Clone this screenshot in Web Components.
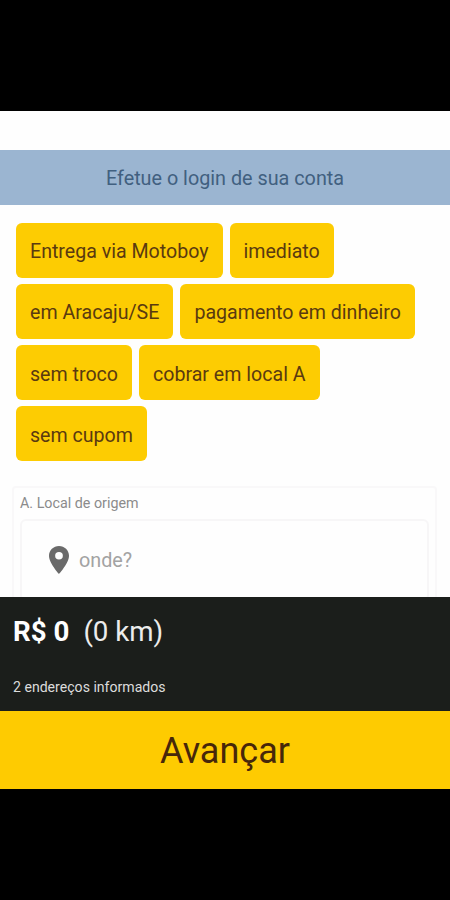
<!DOCTYPE html>
<html lang="pt-BR">
<head>
<meta charset="utf-8">
<meta name="viewport" content="width=device-width, initial-scale=1">
<title>Entrega</title>
<style>
    body{
        margin: 0;
        background-color: #000;
        font-family: Roboto, sans-serif;
    }
</style>
</head>
<body>
<entrega-app>
    <login-bar>Efetue o login de sua conta</login-bar>
    <chip-list>
        <option-chip>Entrega via Motoboy</option-chip>
        <option-chip>imediato</option-chip>
        <option-chip>em Aracaju/SE</option-chip>
        <option-chip>pagamento em dinheiro</option-chip>
        <option-chip>sem troco</option-chip>
        <option-chip>cobrar em local A</option-chip>
        <option-chip>sem cupom</option-chip>
    </chip-list>
    <address-card label="A. Local de origem">onde?</address-card>
    <price-summary slot="footer">
        <span slot="price">R$ 0</span>
        <span slot="distance">(0 km)</span>
        2 endereços informados
    </price-summary>
    <next-button slot="footer">Avançar</next-button>
</entrega-app>

<script>
class EntregaApp extends HTMLElement{
    constructor(){
        super()
        this.attachShadow({mode:"open"})
        this.shadowRoot.innerHTML = `
        <style>
            :host{
                display: flex;
                flex-direction: column;
                box-sizing: border-box;
                height: 900px;
                padding: 111px 0;
                background-color: #000;
            }
            main{
                flex: 1;
                min-height: 0;
                overflow: hidden;
                padding-top: 39px;
                background-color: #fefefe;
            }
            footer{
                flex: none;
            }
        </style>
        <main><slot></slot></main>
        <footer><slot name="footer"></slot></footer>
        `
    }
}
customElements.define('entrega-app', EntregaApp)

class LoginBar extends HTMLElement{
    constructor(){
        super()
        this.attachShadow({mode:"open"})
        this.shadowRoot.innerHTML = `
        <style>
            :host{
                display: flex;
                align-items: center;
                justify-content: center;
                box-sizing: border-box;
                height: 55px;
                padding-top: 2px;
                background-color: #9bb5d1;
                color: #416080;
                font-size: 19.8px;
            }
        </style>
        <slot></slot>
        `
    }
}
customElements.define('login-bar', LoginBar)

class ChipList extends HTMLElement{
    constructor(){
        super()
        this.attachShadow({mode:"open"})
        this.shadowRoot.innerHTML = `
        <style>
            :host{
                display: flex;
                flex-wrap: wrap;
                gap: 6.3px 7px;
                padding: 17.5px 16px 0;
            }
        </style>
        <slot></slot>
        `
    }
}
customElements.define('chip-list', ChipList)

class OptionChip extends HTMLElement{
    constructor(){
        super()
        this.attachShadow({mode:"open"})
        this.shadowRoot.innerHTML = `
        <style>
            :host{
                display: flex;
                align-items: center;
                box-sizing: border-box;
                height: 55px;
                padding: 3px 14px 0;
                border-radius: 6px;
                background-color: #fdcc02;
                color: #5a3a10;
                font-size: 19.6px;
                white-space: nowrap;
            }
        </style>
        <slot></slot>
        `
    }
}
customElements.define('option-chip', OptionChip)

class AddressCard extends HTMLElement{
    constructor(){
        super()
        this.attachShadow({mode:"open"})
        this.shadowRoot.innerHTML = `
        <style>
            :host{
                display: block;
                margin: 25px 13px 0 12px;
                padding: 6px 6px 0;
                border: 2px solid #f9f8f9;
                border-radius: 4px;
            }
            #label{
                height: 25px;
                line-height: 18px;
                color: #8b8b8b;
                font-size: 14.3px;
            }
            #field{
                display: flex;
                align-items: center;
                gap: 10px;
                height: 78px;
                padding-left: 27px;
                border: 2px solid #f7f6f7;
                border-radius: 6px;
                color: #a3a3a3;
                font-size: 19.8px;
            }
            svg{
                width: 20px;
                height: 28px;
                fill: #6a6a6a;
            }
        </style>
        <div id="label"></div>
        <div id="field">
            <svg viewBox="5 2 14 20" preserveAspectRatio="none"><path d="M12 2C8.130 2 5 5.130 5 9c0 5.250 7 13 7 13s7-7.750 7-13c0-3.870-3.130-7-7-7zm0 9.700a2.700 2.700 0 0 1 0-5.400 2.700 2.700 0 0 1 0 5.400z"/></svg>
            <slot></slot>
        </div>
        `
    }
    connectedCallback(){
        this.shadowRoot.getElementById('label').textContent = this.getAttribute('label')
    }
}
customElements.define('address-card', AddressCard)

class PriceSummary extends HTMLElement{
    constructor(){
        super()
        this.attachShadow({mode:"open"})
        this.shadowRoot.innerHTML = `
        <style>
            :host{
                display: block;
                box-sizing: border-box;
                height: 114px;
                padding: 19px 13px 0;
                background-color: #1b1e1b;
                color: #fff;
            }
            #total{
                display: flex;
                gap: 14px;
                height: 62px;
                line-height: 32px;
                font-size: 27.7px;
                color: #ececec;
            }
            strong{
                color: #fff;
            }
            #info{
                line-height: 18px;
                font-size: 14.1px;
                color: #dcdcdc;
            }
        </style>
        <div id="total">
            <strong><slot name="price"></slot></strong>
            <slot name="distance"></slot>
        </div>
        <div id="info"><slot></slot></div>
        `
    }
}
customElements.define('price-summary', PriceSummary)

class NextButton extends HTMLElement{
    constructor(){
        super()
        this.attachShadow({mode:"open"})
        this.shadowRoot.innerHTML = `
        <style>
            :host{
                display: block;
            }
            button{
                display: block;
                width: 100%;
                height: 78px;
                padding: 2px 0 0;
                border: 0;
                background-color: #fecb01;
                color: #47270a;
                font-family: inherit;
                font-size: 36px;
            }
        </style>
        <button><slot></slot></button>
        `
    }
}
customElements.define('next-button', NextButton)
</script>
</body>
</html>
